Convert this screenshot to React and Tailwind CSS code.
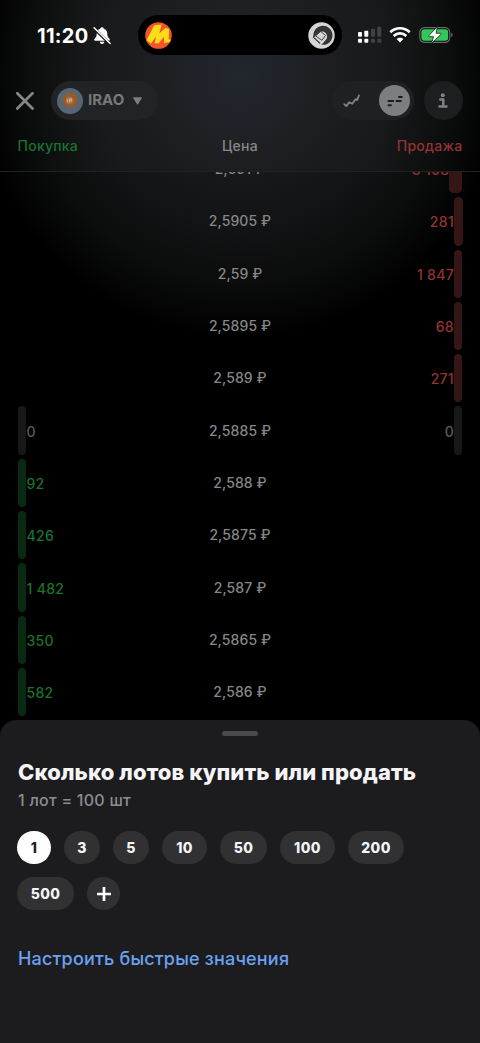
import React, { useState } from 'react'
import clsx from 'clsx'

const ORDERS = [
  { price: '2,591', sell: '3 108', wide: true },
  { price: '2,5905', sell: '281' },
  { price: '2,59', sell: '1 847' },
  { price: '2,5895', sell: '68' },
  { price: '2,589', sell: '271' },
  { price: '2,5885', buy: '0', sell: '0' },
  { price: '2,588', buy: '92' },
  { price: '2,5875', buy: '426' },
  { price: '2,587', buy: '1 482' },
  { price: '2,5865', buy: '350' },
  { price: '2,586', buy: '582' },
]

const LOTS = [
  { value: 1, width: 'w-[34px]' },
  { value: 3, width: 'w-9' },
  { value: 5, width: 'w-9' },
  { value: 10, width: 'w-[45px]' },
  { value: 50, width: 'w-[47px]' },
  { value: 100, width: 'w-[55px]' },
  { value: 200, width: 'w-14' },
  { value: 500, width: 'w-[57px]' },
]

function BellOffIcon() {
  return (
    <svg className="w-[18px] h-[19px]" viewBox="0 0 17 18">
      <path d="M8.5 1.2c-.9 0-1.6.6-1.7 1.4C4.5 3.3 3.5 5.1 3.5 7.4c0 2.6-.8 3.6-2 4.7-.8.8-.5 1.9.6 1.9h12.8c1.1 0 1.4-1.1.6-1.9-1.2-1.1-2-2.1-2-4.7 0-2.3-1-4.1-3.3-4.8-.1-.8-.8-1.4-1.7-1.4z" fill="#fff" />
      <path d="M6.2 15h4.6c-.2 1.2-1.1 2-2.3 2s-2.1-.8-2.3-2z" fill="#fff" />
      <path d="M.8 2.2l15.4 15" stroke="#131415" strokeWidth="2.6" />
      <path d="M1 1.7l15.2 14.9" stroke="#fff" strokeWidth="1.4" strokeLinecap="round" />
    </svg>
  )
}

function StatusBar() {
  return (
    <div className="h-[55px] pt-[15px] flex">
      <div className="w-[138px] h-10 pl-[37px] flex items-center gap-1">
        <span className="text-[20px] leading-10 pt-px font-bold text-white tracking-[0.3px]">11:20</span>
        <BellOffIcon />
      </div>
      <div className="w-[204px] h-10 rounded-full bg-black flex items-center justify-between px-[7px]">
        <svg className="w-[27px] h-[27px]" viewBox="0 0 27 27">
          <circle cx="13.5" cy="13.5" r="13.3" fill="#f2552c" />
          <path d="M1.6 18.2L9.2 3.2l7.4-.8-2.2 8.800 6.300-5.400 3.400 1.400-.4 10.200 2.100.2-1 2.400-5.600.9-.2-6.200-5.200 6.600-4.200.1 1.500-6.800-5.100 6.800z" fill="#ffdc19" />
        </svg>
        <svg className="w-[27px] h-[27px]" viewBox="0 0 27 27">
          <circle cx="13.5" cy="13.5" r="13.2" fill="#d5d5d5" />
          <path d="M7.5 7.200c3.600-4.200 9.900-4.700 13.900-1 4 3.900 4.200 9.900.5 13.700-2.200 2.300-5.200 3.300-8.800 2.800 1.500-1 2.100-2.100 3.200-3.300 3-2.600 3.700-5.500 1.700-8-2-2.300-4.900-2.600-7.100-.6l-5.500 5.100c-.4-3.400.2-6.500 2.100-8.700z" fill="#333537" />
          <path d="M12.800 9.400l4.700 4.100-3.600 4.800-6.300-4.400z" fill="#d5d5d5" stroke="#333537" strokeWidth=".9" strokeLinejoin="round" />
          <path d="M5 14.8l7.200 6.700" stroke="#333537" strokeWidth="1.1" />
        </svg>
      </div>
      <div className="h-10 pl-[15px] flex items-center">
        <svg className="w-[26px] h-[18px]" viewBox="0 0 26 18" fill="#fff">
          <rect x="1" y="6" width="4" height="4.8" rx="1" />
          <rect x="7.3" y="4.7" width="4" height="6.1" rx="1" />
          <rect x="14" y="2.8" width="4" height="8" rx="1" fill="#414244" />
          <rect x="20.3" y=".8" width="4" height="10" rx="1" fill="#414244" />
          <rect x="1" y="12.8" width="4" height="4" rx="1" />
          <rect x="7.3" y="12.8" width="4" height="4" rx="1" />
          <rect x="14" y="12.8" width="4" height="4" rx="1" fill="#414244" />
          <rect x="20.3" y="12.8" width="4" height="4" rx="1" fill="#414244" />
        </svg>
        <svg className="ml-1.5 w-[22px] h-4" viewBox="0 0 22 16" fill="none" stroke="#fff" strokeWidth="2.6">
          <path d="M1.3 5.300C6.800-.1 15.200-.1 20.700 5.300" />
          <path d="M4.7 9c3.600-3.500 9-3.500 12.600 0" />
          <path d="M11 15.6L7.600 12c1.900-1.800 4.900-1.800 6.800 0z" fill="#fff" stroke="none" />
        </svg>
        <svg className="ml-2 w-[35px] h-[18px]" viewBox="0 0 35 18">
          <rect x=".8" y="1.6" width="30" height="14.8" rx="4.8" fill="none" stroke="#6a6c6d" strokeWidth="1.1" />
          <rect x="2.4" y="3.2" width="26.8" height="11.6" rx="3.3" fill="#34c759" />
          <path d="M32.2 6.800c1.800.6 1.800 3.800 0 4.400z" fill="#6a6c6d" />
          <path d="M18.300.6L9.700 9.800c-.3.400-.1.900.4.900h4.400l-2 6.800 9.600-9.300c.4-.4.100-.9-.4-.9h-4.500z" fill="#fff" stroke="#17351f" strokeWidth=".9" />
        </svg>
      </div>
    </div>
  )
}

function TopBar() {
  return (
    <div className="mt-[26px] h-[39px] pl-4 pr-[17.5px] flex items-center">
      <svg className="w-[18px] h-[18px]" viewBox="0 0 18 18" stroke="#858687" strokeWidth="2.700" strokeLinecap="round">
        <path d="M1.3 1.300l15.200 15.200M16.500 1.300L1.300 16.500" />
      </svg>
      <button className="ml-[17px] w-[107px] h-[39px] rounded-full bg-[#222324] flex items-center pl-1.5">
        <svg className="w-[26px] h-[26px]" viewBox="0 0 26 26">
          <circle cx="13" cy="13" r="13" fill="#566675" />
          <path d="M12.5 4.500l2.800 1.300 3 .1.600 2.800 1.900 2.300-.9 2.700.1 2.900-2.900 1.100-2 2.100-2.800-.8-2.900.3-1.400-2.500-2.300-1.700.7-2.800-.6-2.700 2.500-1.600 1.400-2.500z" fill="#9c5a20" />
          <circle cx="12.7" cy="12.5" r="3.800" fill="#a5714b" />
          <path d="M10.4 11v3.300M12.400 14.300V11h2.300v2h-1.800" stroke="#c7b5a6" strokeWidth="1" fill="none" />
        </svg>
        <span className="ml-[5px] w-[45px] text-left text-[15px] font-bold text-[#77797a]">IRAO</span>
        <svg className="w-[9px] h-[8px]" viewBox="0 0 9 8" fill="#7c7d7e">
          <path d="M.8.300h7.400c.5 0 .8.500.5.900L5 7.300c-.2.400-.8.400-1 0L.3 1.200C0 .8.300.3.800.3z" />
        </svg>
      </button>
      <div className="ml-auto w-[82px] h-[39px] rounded-full bg-[#1f2021] flex items-center justify-between pl-[11px] pr-1">
        <svg className="w-[17px] h-[14px]" viewBox="0 0 17 14" fill="none" stroke="#808182" strokeWidth="1.900" strokeLinecap="round" strokeLinejoin="round">
          <path d="M1.3 10.200l2 2 2.800-3.800 3.200 1.300 3.300-4.500 1.600.6 1.700-4.300" />
        </svg>
        <span className="w-[31px] h-[31px] rounded-full bg-[#7d7e7f] flex items-center justify-center">
          <svg className="w-4 h-3" viewBox="0 0 16 12" stroke="#1b1c1d" strokeWidth="1.900" strokeLinecap="round">
            <path d="M1.5 6h4.700M1.500 10.300h2.400M9.500 6h4.300M11.900 2h3" />
          </svg>
        </span>
      </div>
      <div className="ml-[9.5px] w-[39px] h-[39px] rounded-full bg-[#1d1e1f] flex items-center justify-center">
        <svg className="w-[10px] h-[16px]" viewBox="0 0 10 16" fill="none" stroke="#808182" strokeWidth="2.500" strokeLinecap="round" strokeLinejoin="round">
          <path d="M2.3 6.500h3V13M1.500 13.500h7" />
          <circle cx="4.8" cy="2.2" r="2" fill="#808182" stroke="none" />
        </svg>
      </div>
    </div>
  )
}

function OrderRow({ price, buy, sell, wide }) {
  return (
    <div className="h-[52.3px] py-[2px] px-[17.5px] flex items-center justify-between">
      <div className="w-[120px] h-full flex items-center">
        {buy && (
          <>
            <div className={clsx('w-[8.5px] h-full rounded-full', buy === '0' ? 'bg-[#181819]' : 'bg-[#0a2912]')} />
            <span className={clsx('pt-px pl-[0.5px] text-[14px] font-medium tracking-[0.3px]', buy === '0' ? 'text-[#5a5b5b]' : 'text-[#19732e]')}>
              {buy}
            </span>
          </>
        )}
      </div>
      <span className="pb-px text-[14px] font-medium tracking-[0.1px] text-[#868788]">{price} ₽</span>
      <div className="w-[120px] h-full flex items-center justify-end">
        {sell && (
          <>
            <span className={clsx('pt-px text-[14px] font-medium tracking-[0.3px]', sell === '0' ? 'text-[#5a5b5b]' : 'text-[#933433]')}>
              {sell}
            </span>
            <div
              className={clsx(
                'h-full',
                wide ? 'w-[13px] rounded-[4.5px]' : 'w-[8.5px] rounded-full',
                sell === '0' ? 'bg-[#181819]' : 'bg-[#341616]'
              )}
            />
          </>
        )}
      </div>
    </div>
  )
}

function LotSheet() {
  const [selected, setSelected] = useState(1)

  return (
    <div className="relative h-[323px] shrink-0 rounded-t-[16px] bg-[#1c1c1e] px-[17px] pt-[11px]">
      <div className="mx-auto w-9 h-[5px] rounded-full bg-[#4a4a4c]" />
      <h2 className="mt-[22px] pl-px text-[22px] leading-[28px] font-extrabold tracking-[0.09px] text-[#f5f5f8] whitespace-nowrap">
        Сколько лотов купить или продать
      </h2>
      <p className="mt-[3px] pl-px text-[16px] leading-[22px] font-medium tracking-[0.25px] text-[#8b8d92]">1 лот = 100 шт</p>
      <div className="mt-5 flex flex-wrap gap-[13px]">
        {LOTS.map(lot => (
          <button
            key={lot.value}
            onClick={() => setSelected(lot.value)}
            className={clsx(
              'h-[33px] rounded-full text-[14px] font-extrabold tracking-[0.4px]',
              lot.width,
              lot.value === selected ? 'bg-white text-[#1c1c1e]' : 'bg-[#313133] text-[#f5f5f8]'
            )}
          >
            {lot.value}
          </button>
        ))}
        <button className="w-[33px] h-[33px] rounded-full bg-[#313133] flex items-center justify-center">
          <svg className="w-[14px] h-[14px]" viewBox="0 0 14 14" stroke="#fff" strokeWidth="2.7">
            <path d="M7 0v14M0 7h14" />
          </svg>
        </button>
      </div>
      <button className="mt-[37px] pl-px block text-[18px] leading-6 font-medium tracking-[0.18px] text-[#6ba1f2]">Настроить быстрые значения</button>
    </div>
  )
}

export default function App() {
  return (
    <div className="w-[480px] h-[1043px] overflow-hidden flex flex-col bg-black bg-[radial-gradient(circle_265px_at_240px_75px,#1d2129_0%,#181a1d_30%,#131415_55%,#0b0c0c_78%,#000_100%)] font-['Inter','Liberation_Sans',sans-serif]">
      <div className="h-[172px] shrink-0 border-b border-[#1f2122] bg-[linear-gradient(90deg,transparent,rgba(255,255,255,0.025)_20%,rgba(255,255,255,0.025)_80%,transparent)]">
        <StatusBar />
        <TopBar />
        <div className="mt-4 px-[17.5px] flex justify-between text-[14px] leading-5 font-medium tracking-[0.25px]">
          <span className="w-[120px] text-[#19732e]">Покупка</span>
          <span className="text-[#868788]">Цена</span>
          <span className="w-[120px] text-right text-[#933433]">Продажа</span>
        </div>
      </div>
      <div className="h-[548px] shrink-0 overflow-hidden">
        <div className="-mt-[29px]">
          {ORDERS.map(order => (
            <OrderRow key={order.price} {...order} />
          ))}
        </div>
      </div>
      <LotSheet />
    </div>
  )
}
